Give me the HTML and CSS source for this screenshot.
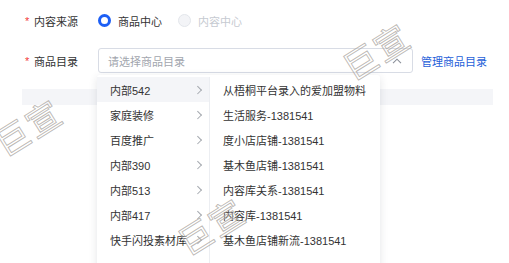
FILE: index.html
```html
<!DOCTYPE html>
<html lang="zh">
<head>
<meta charset="utf-8">
<link rel="stylesheet" href="styles.css">
</head>
<body>
<div class="page">
  <div class="form">
    <div class="row">
      <div class="label"><span class="star">*</span>内容来源</div>
      <div class="control radios">
        <label class="radio checked"><span class="dot"></span>商品中心</label>
        <label class="radio disabled"><span class="dot"></span>内容中心</label>
      </div>
    </div>
    <div class="row row2">
      <div class="label"><span class="star">*</span>商品目录</div>
      <div class="control">
        <div class="select">
          <span class="placeholder">请选择商品目录</span>
          <svg class="caret" width="10" height="6" viewBox="0 0 10 6"><path d="M1 5.2 L5 1.2 L9 5.2" fill="none" stroke="#8a8f99" stroke-width="1.1"/></svg>
        </div>
        <a class="link">管理商品目录</a>
      </div>
    </div>
    <div class="band"></div>
  </div>

  <div class="dropdown">
    <ul class="col left">
      <li class="active"><span>内部542</span><i class="chev"></i></li>
      <li><span>家庭装修</span><i class="chev"></i></li>
      <li><span>百度推广</span><i class="chev"></i></li>
      <li><span>内部390</span><i class="chev"></i></li>
      <li><span>内部513</span><i class="chev"></i></li>
      <li><span>内部417</span><i class="chev"></i></li>
      <li><span>快手闪投素材库</span><i class="chev"></i></li>
    </ul>
    <ul class="col right">
      <li>从梧桐平台录入的爱加盟物料</li>
      <li>生活服务-1381541</li>
      <li>度小店店铺-1381541</li>
      <li>基木鱼店铺-1381541</li>
      <li>内容库关系-1381541</li>
      <li>内容库-1381541</li>
      <li>基木鱼店铺新流-1381541</li>
    </ul>
  </div>

  <span class="wm wm1">巨宣</span>
  <span class="wm wm2">巨宣</span>
  <span class="wm wm3">巨宣</span>
</div>
</body>
</html>
```

FILE: styles.css
```css
* { box-sizing: border-box; }
html, body { margin: 0; padding: 0; background: #fff; }
body {
  font-family: "Liberation Sans", "Noto Sans CJK SC", sans-serif;
  font-size: 11px;
  color: #333;
  width: 509px;
  height: 263px;
  overflow: hidden;
}
.page { position: relative; width: 509px; height: 263px; overflow: hidden; }
.form { padding: 8px 16px 0 22px; }
.row { display: flex; align-items: center; height: 25px; }
.row2 { margin-top: 15px; }
.label { width: 76px; display: flex; align-items: center; color: #333; }
.star { color: #f23c3c; width: 12px; padding-left: 3px; font-size: 11px; line-height: 1; position: relative; top: 1px; }
.control { display: flex; align-items: center; }
.radios { gap: 16px; }
.radio { display: flex; align-items: center; gap: 7px; }
.dot { width: 13px; height: 13px; border-radius: 50%; display: inline-block; }
.radio.checked .dot { border: 3.5px solid #1d5ff5; background: #fff; }
.radio.disabled { color: #c6cad1; }
.radio.disabled .dot { border: 1px solid #e3e6eb; background: #f3f4f7; }
.select {
  width: 315px; height: 25px;
  border: 1px solid #d8dce5; border-radius: 3px;
  display: flex; align-items: center; justify-content: space-between;
  padding: 0 10px 0 9px;
}
.placeholder { color: #a2a6ae; }
.caret { display: block; }
.link { margin-left: 8px; color: #1f5fd9; }
.band { margin-top: 16px; height: 16px; width: 471px; background: #f4f5f8; }

.dropdown {
  position: absolute; left: 97px; top: 75px;
  width: 283px; height: 200px;
  background: #fff;
  box-shadow: 0 2px 8px rgba(30, 40, 60, 0.12);
  border-radius: 3px;
  display: flex;
  padding-top: 2px;
}
.col { list-style: none; margin: 0; padding: 0; }
.col li { height: 25px; display: flex; align-items: center; white-space: nowrap; }
.left { width: 113px; border-right: 1px solid #eceef2; }
.left li { padding: 0 8px 0 13px; justify-content: space-between; }
.left li.active { background: #f4f5f8; }
.right { padding-left: 13px; }
.chev {
  width: 5.5px; height: 5.5px;
  border-top: 1px solid #a3a7ae; border-right: 1px solid #a3a7ae;
  transform: rotate(45deg);
  margin-right: 1px;
}

.wm {
  position: absolute;
  font-family: "Noto Sans CJK SC", sans-serif;
  font-size: 34px;
  line-height: 1;
  color: rgba(255, 255, 255, 0.2);
  -webkit-text-stroke: 0.9px rgba(170, 165, 160, 0.8);
  transform: rotate(-32deg);
  letter-spacing: 2px;
  pointer-events: none;
  white-space: nowrap;
}
.wm1 { left: 340px; top: 34px; }
.wm2 { left: -8px; top: 110px; }
.wm3 { left: 175px; top: 209px; }
```
